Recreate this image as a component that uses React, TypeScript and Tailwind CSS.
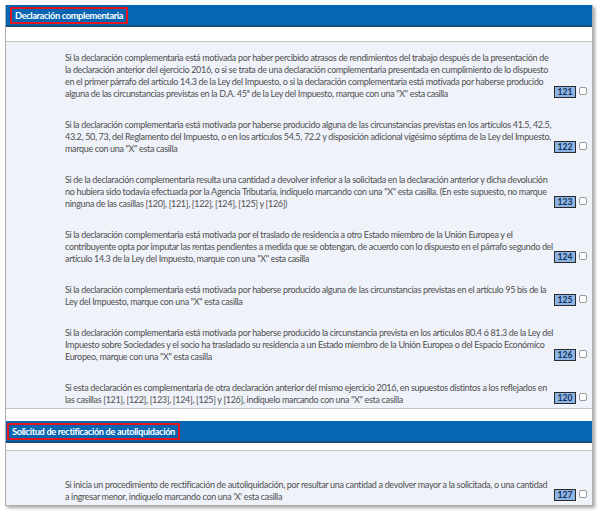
import React from "react";

type Item = { lines: string[]; code: string };

const section1: Item[] = [
  {
    code: "121",
    lines: [
      "Si la declaración complementaria está motivada por haber percibido atrasos de rendimientos del trabajo después de la presentación de",
      "la declaración anterior del ejercicio 2016, o si se trata de una declaración complementaria presentada en cumplimiento de lo dispuesto",
      "en el primer párrafo del artículo 14.3 de la Ley del Impuesto, o si la declaración complementaria está motivada por haberse producido",
      "alguna de las circunstancias previstas en la D.A. 45ª de la Ley del Impuesto, marque con una \"X\" esta casilla",
    ],
  },
  {
    code: "122",
    lines: [
      "Si la declaración complementaria está motivada por haberse producido alguna de las circunstancias previstas en los artículos 41.5, 42.5,",
      "43.2, 50, 73, del Reglamento del Impuesto, o en los artículos 54.5, 72.2 y disposición adicional vigésimo séptima de la Ley del Impuesto,",
      "marque con una \"X\" esta casilla",
    ],
  },
  {
    code: "123",
    lines: [
      "Si de la declaración complementaria resulta una cantidad a devolver inferior a la solicitada en la declaración anterior y dicha devolución",
      "no hubiera sido todavía efectuada por la Agencia Tributaria, indíquelo marcando con una \"X\" esta casilla. (En este supuesto, no marque",
      "ninguna de las casillas [120], [121], [122], [124], [125] y [126])",
    ],
  },
  {
    code: "124",
    lines: [
      "Si la declaración complementaria está motivada por el traslado de residencia a otro Estado miembro de la Unión Europea y el",
      "contribuyente opta por imputar las rentas pendientes a medida que se obtengan, de acuerdo con lo dispuesto en el párrafo segundo del",
      "artículo 14.3 de la Ley del Impuesto, marque con una \"X\" esta casilla",
    ],
  },
  {
    code: "125",
    lines: [
      "Si la declaración complementaria está motivada por haberse producido alguna de las circunstancias previstas en el artículo 95 bis de la",
      "Ley del Impuesto, marque con una \"X\" esta casilla",
    ],
  },
  {
    code: "126",
    lines: [
      "Si la declaración complementaria está motivada por haberse producido la circunstancia prevista en los artículos 80.4 ó 81.3 de la Ley del",
      "Impuesto sobre Sociedades y el socio ha trasladado su residencia a un Estado miembro de la Unión Europea o del Espacio Económico",
      "Europeo, marque con una \"X\" esta casilla",
    ],
  },
  {
    code: "120",
    lines: [
      "Si esta declaración es complementaria de otra declaración anterior del mismo ejercicio 2016, en supuestos distintos a los reflejados en",
      "las casillas [121], [122], [123], [124], [125] y [126], indíquelo marcando con una \"X\" esta casilla",
    ],
  },
];

const section2: Item[] = [
  {
    code: "127",
    lines: [
      "Si inicia un procedimiento de rectificación de autoliquidación, por resultar una cantidad a devolver mayor a la solicitada, o una cantidad",
      "a ingresar menor, indíquelo marcando con una 'X' esta casilla",
    ],
  },
];

function Row({ item }: { item: Item }) {
  return (
    <div className="flex items-end">
      <div className="shrink-0 pl-[59px] w-[548px] text-[9px] tracking-[-0.33px] leading-[12px] text-[#505050]">
        {item.lines.map((l, i) => (
          <div key={i} className="whitespace-nowrap">
            {l}
          </div>
        ))}
      </div>
      <div className="flex items-start gap-[3px] mb-[2px]">
        <div className="w-[22px] h-[12px] bg-[#8db5e3] border border-[#2a2a2a] flex items-center justify-center text-[8.5px] font-bold leading-none text-[#132f57]">
          {item.code}
        </div>
        <div className="w-[8px] h-[8px] mt-[1px] bg-white border border-[#9a9a9a] rounded-[2px]" />
      </div>
    </div>
  );
}

function Header({ title, ml }: { title: string; ml: string }) {
  return (
    <div className={`h-[22px] bg-[#0766b1] border-b-2 border-[#1c4c7c] flex items-start pt-[2px] ${ml}`}>
      <div className="flex items-center h-[17px] border-2 border-[#e3141c] px-[3px] text-white font-bold text-[9.3px] tracking-[-0.38px] leading-none">
        {title}
      </div>
    </div>
  );
}

export default function App() {
  return (
    <div className="w-[600px] h-[511px] bg-white" style={{ fontFamily: "Lato, 'Liberation Sans', sans-serif" }}>
      <div className="pt-[5px] pl-[5px]">
        <div className="w-[588px] border-x border-b border-[#b0b0b0] bg-white shadow-[2px_2px_3px_rgba(0,0,0,0.35)]">
          <Header title="Declaración complementaria" ml="pl-[4px]" />
          <div className="h-[15px] bg-white border-b border-[#c4c4c4]" />
          <div className="bg-[#eff2f9] pt-[10px] pb-[2px] flex flex-col gap-[19px] border-b border-[#c4c4c4]">
            {section1.map((it) => (
              <Row key={it.code} item={it} />
            ))}
          </div>
          <div className="h-[12px] bg-white" />
          <Header title="Solicitud de rectificación de autoliquidación" ml="pl-[1px]" />
          <div className="h-[8px] bg-white border-b border-[#c4c4c4]" />
          <div className="bg-[#eff2f9] pt-[28px] pb-[2px] flex flex-col gap-[19px]">
            {section2.map((it) => (
              <Row key={it.code} item={it} />
            ))}
          </div>
        </div>
      </div>
    </div>
  );
}
